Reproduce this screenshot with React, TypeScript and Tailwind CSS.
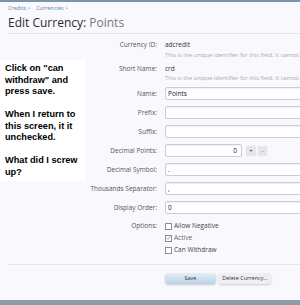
import React from "react";

const ui = { fontFamily: '"Open Sans", "DejaVu Sans", sans-serif' };

const Field = ({ value = "", right = false }: { value?: string; right?: boolean }) => (
  <div
    className={`h-[13px] rounded-[2px] border border-[#c9cdd9] bg-white shadow-[inset_0_1px_1px_rgba(0,0,0,0.06)] px-[2px] text-[6.5px] leading-[11px] text-[#222] ${
      right ? "w-[77px] text-right pr-[4px]" : "w-[150px]"
    }`}
  >
    {value}
  </div>
);

const Row = ({ label, children, className = "" }: { label: string; children: React.ReactNode; className?: string }) => (
  <div className={`flex items-center ${className}`}>
    <div className="w-[157px] shrink-0 text-right text-[6.5px] text-[#555]">{label}</div>
    <div className="ml-[8px] flex items-center">{children}</div>
  </div>
);

const Check = ({ label, checked = false }: { label: string; checked?: boolean }) => (
  <div className="flex h-[12px] items-center gap-[2px] text-[6.5px] text-[#444]">
    <span className="flex h-[7px] w-[7px] items-center justify-center border border-[#8a8f99] bg-white">
      {checked && (
        <svg viewBox="0 0 6 6" className="h-[6px] w-[6px]">
          <path d="M0.9 3 L2.4 4.6 L5.3 0.9" fill="none" stroke="#8d939e" strokeWidth="1" />
        </svg>
      )}
    </span>
    <span className={checked ? "text-[#666]" : ""}>{label}</span>
  </div>
);

const hint = "This is the unique identifier for this field. It cannot";

export default function App() {
  return (
    <div className="relative h-[305px] w-[300px] overflow-hidden bg-[#8c9ca6]" style={ui}>
      <div className="h-[300px] border-t-2 border-[#7895ae] bg-[#f9f9fd]">
        <div className="px-[8px] pt-[2px] text-[5.5px] leading-[8px] text-[#5d7fa8]">
          Credits &gt; <span className="ml-[4px]">Currencies &gt;</span>
        </div>
        <h1 className="mt-[3px] px-[8px] text-[12px] leading-[16px] text-[#2b2b2b]">
          Edit Currency: <span className="text-[#777]">Points</span>
        </h1>
        <div className="ml-[8px] mt-[2px] border-t border-[#e4e6ee]" />

        <Row label="Currency ID:" className="mt-[6px] h-[10px]">
          <span className="text-[6.5px] text-[#333]">adcredit</span>
        </Row>
        <div className="ml-[165px] mt-[1px] whitespace-nowrap text-[5.8px] leading-[8px] text-[#a8a8b0]">{hint}</div>

        <Row label="Short Name:" className="mt-[5px] h-[10px]">
          <span className="text-[6.5px] text-[#333]">crd</span>
        </Row>
        <div className="ml-[165px] whitespace-nowrap text-[5.8px] leading-[8px] text-[#a8a8b0]">{hint}</div>

        <div className="mt-[5px] flex flex-col gap-[6px]">
          <Row label="Name:">
            <Field value="Points" />
          </Row>
          <Row label="Prefix:">
            <Field />
          </Row>
          <Row label="Suffix:">
            <Field />
          </Row>
          <Row label="Decimal Points:">
            <Field value="0" right />
            <button className="ml-[4px] h-[10px] w-[10px] rounded-[2px] bg-[#e6e7ee] text-[6px] leading-[10px] text-[#333] shadow-[0_0_1px_rgba(0,0,0,0.2)]">
              +
            </button>
            <button className="ml-[2px] h-[10px] w-[9px] rounded-[2px] bg-[#e6e7ee] text-[6px] leading-[10px] text-[#333] shadow-[0_0_1px_rgba(0,0,0,0.2)]">
              -
            </button>
          </Row>
          <Row label="Decimal Symbol:">
            <Field value="." />
          </Row>
          <Row label="Thousands Separator:">
            <Field value="," />
          </Row>
          <Row label="Display Order:">
            <Field value="0" />
          </Row>
        </div>

        <div className="mt-[6px] flex">
          <div className="w-[157px] shrink-0 text-right text-[6.5px] leading-[12px] text-[#555]">Options:</div>
          <div className="ml-[8px] flex flex-col">
            <Check label="Allow Negative" />
            <Check label="Active" checked />
            <Check label="Can Withdraw" />
          </div>
        </div>

        <div className="ml-[8px] mt-[8px] border-t border-[#e6e8ef]" />

        <div className="ml-[165px] mt-[8px] flex gap-[3px]">
          <button className="h-[11px] w-[51px] rounded-[3px] bg-gradient-to-b from-[#e4eff7] to-[#b9d3e5] text-[5.5px] text-[#333] shadow-[0_1px_2px_rgba(0,0,0,0.18)]">
            Save
          </button>
          <button className="h-[11px] w-[52px] rounded-[3px] bg-[#eeeef4] text-[5.5px] text-[#333] shadow-[0_1px_2px_rgba(0,0,0,0.18)]">
            Delete Currency...
          </button>
        </div>
      </div>

      <div
        className="absolute left-0 top-[60px] w-[86px] bg-white px-[5px] py-[3px] text-[9.2px] font-bold leading-[11.5px] text-black"
        style={{ fontFamily: '"Liberation Sans", Arial, sans-serif' }}
      >
        <p>Click on "can withdraw" and press save.</p>
        <p className="mt-[11.5px]">When I return to this screen, it it unchecked.</p>
        <p className="mt-[11.5px]">What did I screw up?</p>
      </div>
    </div>
  );
}
